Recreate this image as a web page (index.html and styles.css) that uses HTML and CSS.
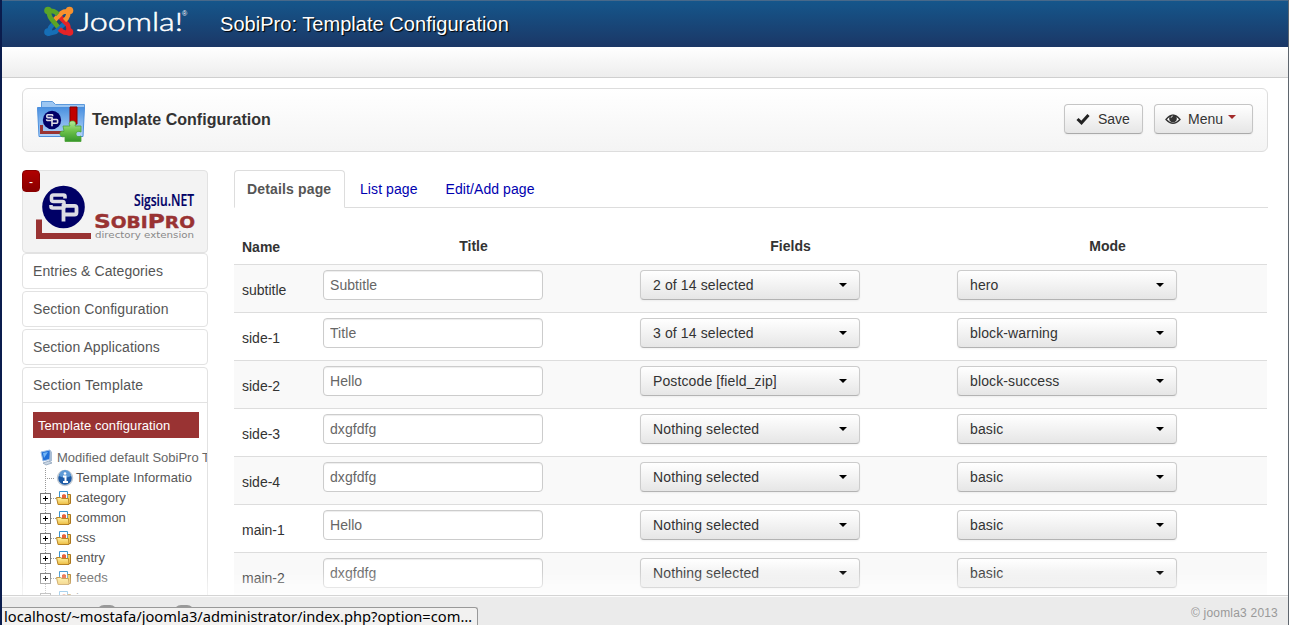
FILE: index.html
```
<!DOCTYPE html>
<html lang="en">
<head>
<meta charset="utf-8">
<title>SobiPro: Template Configuration</title>
<link rel="stylesheet" href="styles.css">
</head>
<body>
<svg width="0" height="0" class="defs">
  <defs>
    <linearGradient id="gFolder" x1="0" y1="0" x2="0" y2="1"><stop offset="0" stop-color="#4a90e0"/><stop offset=".3" stop-color="#6ba6e8"/><stop offset="1" stop-color="#b4d4f8"/></linearGradient>
    <linearGradient id="gGreen" x1="0" y1="0" x2="0" y2="1"><stop offset="0" stop-color="#b5ea9a"/><stop offset=".5" stop-color="#6cc14a"/><stop offset="1" stop-color="#36962a"/></linearGradient>
    <linearGradient id="gYellow" x1="0" y1="0" x2="0" y2="1"><stop offset="0" stop-color="#fff3a6"/><stop offset="1" stop-color="#edbd42"/></linearGradient>
    <g id="sp">
      <circle r="21.3" fill="#000066"/>
      <path d="M1.500-8.500V-10.500Q1.500-12 0-12H-10Q-12-12-12-10V-7.500Q-12-5.500-10-5.500H-1Q.5-5.500.5-4V-.5Q.5 1-1 1H-11Q-12.500 1-12.500-.5V-2" fill="none" stroke="#dcdce4" stroke-width="3.600"/>
      <path d="M0 14.500V-1.200H11Q13-1.200 13 .8V5.500Q13 7.500 11 7.500H0" fill="none" stroke="#dcdce4" stroke-width="3.800"/>
    </g>
    <g id="folder">
      <path d="M3.500 1.500h8v9h-8z" fill="#fff" stroke="#3b96d2"/><path d="M6 5l2-1 2 1v3H6z" fill="#e8633a"/>
      <path d="M11.500 4.500h3v9h-2" fill="#f5cf5b" stroke="#aa761c"/>
      <path d="M.5 7.500h4l1.500 1h6.500l.5 6H2z" fill="url(#gYellow)" stroke="#b98425"/>
    </g>
  </defs>
</svg>
<div class="window">
  <header class="navbar">
    <svg class="joomla" width="152" height="40" viewBox="0 0 152 40">
      <g fill="none" stroke-width="4.600">
        <path d="M24 22l-9.500 9-6 1.500Q8 28 10 25.500l2-2" stroke="#166fb7"/>
        <path d="M18 15l8.500 8.500q1.500 2.500 1 8.500Q23 32 20.500 30l-2-2" stroke="#e52328"/>
        <path d="M11.500 21l9-9q2.500-2 7-1.500 0 4.500-2 7l-2 2" stroke="#f8912d"/>
        <path d="M17 26l-7-8.500Q7.500 14 8 10q4.500-.5 7 1.500l2 2" stroke="#5aa427"/>
      </g>
      <circle cx="7" cy="9.500" r="3.800" fill="#5aa427"/><circle cx="28.500" cy="9.500" r="3.800" fill="#f8912d"/><circle cx="28.500" cy="31" r="3.800" fill="#e52328"/><circle cx="7" cy="31" r="3.800" fill="#166fb7"/>
      <text class="joomla-word" x="36" y="29.500" textLength="106" lengthAdjust="spacingAndGlyphs">Joomla!</text>
      <text class="joomla-reg" x="141" y="15">®</text>
    </svg>
    <h1>SobiPro: Template Configuration</h1>
  </header>
  <div class="subbar"></div>
  <main class="content">
    <section class="titlebar">
      <svg class="title-icon" width="50" height="44" viewBox="0 0 50 44">
        <path d="M4.500 10V2.500h11l3 3h29V10z" fill="#9cc6f2" stroke="#5c99dc"/>
        <path d="M.5 8.500h47l-1.500 29h-44z" fill="url(#gFolder)" stroke="#4c8fdc"/>
        <path d="M4.500 26v7.500h26" fill="none" stroke="#993333" stroke-width="3"/>
        <use href="#sp" transform="translate(15 21) scale(.43)"/>
        <path d="M33 8h7v17h-7z" fill="#c00000" stroke="#850000"/>
        <path d="M26 27h7c-2-3 0-5 2.500-5s4 2 2.500 5h6v6c-3-1.500-5 0-5 2s2 3.500 5 2v5.500H28v-5c-4 1-5-1-5-3s2-3 4-2z" fill="url(#gGreen)" stroke="#4da338" stroke-width=".8"/>
      </svg>
      <h2>Template Configuration</h2>
      <button class="btn save"><svg width="14" height="14" viewBox="0 0 14 14"><path d="M1.500 7l4 3.800L12.500 3" fill="none" stroke="#222" stroke-width="3"/></svg>Save</button>
      <button class="btn menu"><svg width="16" height="14" viewBox="0 0 16 14"><path d="M1 7.500Q8-1 15 7.500Q8 15 1 7.500z" fill="#fff" stroke="#333" stroke-width="1.300"/><circle cx="8" cy="6.500" r="3.800" fill="#333"/><path d="M6 6q0-2 2-2" fill="none" stroke="#ddd" stroke-width=".8"/></svg>Menu<i class="caret red"></i></button>
    </section>
    <div class="columns">
      <aside class="sidebar">
        <div class="brand">
          <span class="collapse">-</span>
          <svg width="184" height="81" viewBox="0 0 184 81">
            <path d="M16 48.500v16.500h52" fill="none" stroke="#993333" stroke-width="6"/>
            <use href="#sp" transform="translate(40.500 36)"/>
            <text class="sigsiu" x="111" y="35" textLength="60" lengthAdjust="spacingAndGlyphs">Sigsiu.NET</text>
            <text class="sobi" x="71" y="57" textLength="101" lengthAdjust="spacingAndGlyphs">S<tspan class="sc">OBI</tspan>P<tspan class="sc">RO</tspan></text>
            <text class="dir" x="72" y="67" textLength="99" lengthAdjust="spacingAndGlyphs">directory extension</text>
          </svg>
        </div>
        <a class="acc">Entries &amp; Categories</a>
        <a class="acc">Section Configuration</a>
        <a class="acc">Section Applications</a>
        <div class="panel">
          <a class="panel-head">Section Template</a>
          <a class="current">Template configuration</a>
          <ul class="tree">
            <li class="root"><svg width="16" height="18" viewBox="0 0 16 18"><path d="M2 3l9-2 1 9-8 2z" fill="#1f6fd8" stroke="#9abce5"/><path d="M4 4l5-1-4 6z" fill="#72b5f5"/><path d="M11 1l2 2v9l-3 1" fill="#a9bdd4"/><path d="M4 14l6-2 3 2-6 2z" fill="#c9d6e4" stroke="#8499b3" stroke-width=".7"/></svg>Modified default SobiPro T</li>
            <li class="info"><span class="line"></span><svg width="18" height="18" viewBox="0 0 18 18"><circle cx="9" cy="9" r="7.500" fill="#1d5ba6" stroke="#c3cbd3" stroke-width="1.500"/><path d="M3 7a6 6 0 0 1 12 0q-6 3-12 0" fill="#5d9ad6"/><path d="M7 7.500h2.500v5M7 13h5" fill="none" stroke="#fff" stroke-width="2"/><circle cx="9" cy="4.500" r="1.300" fill="#fff"/></svg>Template Informatio</li>
            <li><span class="line plus"></span><svg width="17" height="16" viewBox="0 0 17 16"><use href="#folder"/></svg>category</li>
            <li><span class="line plus"></span><svg width="17" height="16" viewBox="0 0 17 16"><use href="#folder"/></svg>common</li>
            <li><span class="line plus"></span><svg width="17" height="16" viewBox="0 0 17 16"><use href="#folder"/></svg>css</li>
            <li><span class="line plus"></span><svg width="17" height="16" viewBox="0 0 17 16"><use href="#folder"/></svg>entry</li>
            <li><span class="line plus"></span><svg width="17" height="16" viewBox="0 0 17 16"><use href="#folder"/></svg>feeds</li>
            <li><span class="line plus"></span><svg width="17" height="16" viewBox="0 0 17 16"><use href="#folder"/></svg>js</li>
          </ul>
        </div>
      </aside>
      <section class="main">
        <nav class="tabs"><a class="active">Details page</a><a>List page</a><a>Edit/Add page</a></nav>
        <div class="grid">
          <div class="row head"><span class="name">Name</span><span>Title</span><span>Fields</span><span>Mode</span></div>
          <div class="row"><span class="name">subtitle</span><input value="Subtitle"><div class="select">2 of 14 selected<i class="caret"></i></div><div class="select">hero<i class="caret"></i></div></div>
          <div class="row"><span class="name">side-1</span><input value="Title"><div class="select">3 of 14 selected<i class="caret"></i></div><div class="select">block-warning<i class="caret"></i></div></div>
          <div class="row"><span class="name">side-2</span><input value="Hello"><div class="select">Postcode [field_zip]<i class="caret"></i></div><div class="select">block-success<i class="caret"></i></div></div>
          <div class="row"><span class="name">side-3</span><input value="dxgfdfg"><div class="select">Nothing selected<i class="caret"></i></div><div class="select">basic<i class="caret"></i></div></div>
          <div class="row"><span class="name">side-4</span><input value="dxgfdfg"><div class="select">Nothing selected<i class="caret"></i></div><div class="select">basic<i class="caret"></i></div></div>
          <div class="row"><span class="name">main-1</span><input value="Hello"><div class="select">Nothing selected<i class="caret"></i></div><div class="select">basic<i class="caret"></i></div></div>
          <div class="row"><span class="name">main-2</span><input value="dxgfdfg"><div class="select">Nothing selected<i class="caret"></i></div><div class="select">basic<i class="caret"></i></div></div>
        </div>
      </section>
    </div>
  </main>
  <footer class="status"><i class="badge one"></i><i class="badge two"></i><span>© joomla3 2013</span></footer>
  <div class="linkbar"><svg width="480" height="19"><text x="2" y="14" textLength="468" lengthAdjust="spacingAndGlyphs">localhost/~mostafa/joomla3/administrator/index.php?option=com…</text></svg></div>
</div>
</body>
</html>
```
FILE: styles.css
```
* { box-sizing: border-box; }
body { margin: 0; height: 625px; overflow: hidden; padding: 0 1px 0 2px; background: linear-gradient(90deg, #0a1c4d 0 2px, #5f666e 2px); font: 14px/18px "Liberation Sans", Arial, sans-serif; color: #333; }
.defs { position: absolute; }
.window { position: relative; height: 625px; overflow: hidden; background: #fff; }
.navbar { height: 47px; display: flex; padding-left: 39px; border-top: 1px solid #48698a; background: linear-gradient(#15568b, #1b3766); }
.joomla { display: block; flex: none; }
.joomla-word { font: 300 26px Lato, sans-serif; fill: #fff; stroke: #fff; stroke-width: .5px; }
.joomla-reg { font: 7px "Liberation Sans", sans-serif; fill: #fff; }
.navbar h1 { margin: 0 0 0 27px; font-size: 20px; font-weight: normal; line-height: 46px; letter-spacing: .04px; color: #fff; text-shadow: 1px 1px 1px #000; }
.subbar { height: 31px; border-bottom: 1px solid #cfcfcf; background: linear-gradient(#fff, #ededed); }
.content { padding: 10px 20px 0; }
.titlebar { height: 64px; display: flex; align-items: center; padding: 0 14px; border: 1px solid #ddd; border-radius: 6px; background: linear-gradient(#fff, #f4f4f4); }
.title-icon { margin-top: 1px; flex: none; }
.titlebar h2 { flex: 1; margin: 0 0 0 5px; font-size: 16px; line-height: 20px; letter-spacing: .02px; }
.btn { height: 30px; display: flex; align-items: center; border: 1px solid #c5c5c5; border-bottom-color: #aaa; border-radius: 4px; margin-bottom: 2px; padding: 0 10px; background: linear-gradient(#fff, #e6e6e6); font: 14px/18px "Liberation Sans", sans-serif; color: #333; box-shadow: 0 1px 2px rgba(0,0,0,.05); text-shadow: 0 1px 1px rgba(255,255,255,.75); }
.save { width: 79px; margin-right: 11px; }
.save svg { margin: 0 8px 0 1px; }
.menu { width: 99px; }
.menu svg { margin-right: 7px; }
.caret { width: 0; height: 0; border: 4px solid transparent; border-top-color: #000; border-bottom: 0; }
.caret.red { border-top-color: #a22a2a; margin: -5px 0 0 5px; }
.columns { display: flex; gap: 26px; margin-top: 18px; }
.sidebar { width: 186px; flex: none; }
.brand { position: relative; height: 83px; border: 1px solid #e2e2e2; border-radius: 4px; background: #f3f3f3; }
.brand svg { display: block; }
.collapse { position: absolute; left: -1px; top: -1px; width: 18px; height: 22px; border-radius: 4px; border: 1px solid #8a0000; background: linear-gradient(#b00000, #8a0000); color: #fff; font-size: 12px; line-height: 22px; text-align: center; }
.sigsiu { font: 600 16px "Open Sans", sans-serif; fill: #000066; stroke: #000066; stroke-width: .2px; }
.sobi { font: bold 20px "DejaVu Sans", sans-serif; fill: #993333; stroke: #993333; stroke-width: .4px; }
.sobi .sc { font-size: 16px; }
.dir { font: 9.5px "DejaVu Sans", sans-serif; fill: #888; }
.acc, .panel-head { letter-spacing: .08px; }
.acc { display: block; height: 36px; margin-bottom: 2px; padding: 8px 10px; border: 1px solid #e2e2e2; border-radius: 4px; color: #555; }
.panel { height: 260px; border: 1px solid #e2e2e2; border-radius: 4px; overflow: hidden; }
.panel-head { display: block; height: 35px; padding: 8px 10px; border-bottom: 1px solid #e2e2e2; color: #555; letter-spacing: .2px; }
.current { display: block; height: 26px; margin: 9px 8px 0 10px; padding-left: 5px; background: #993333; color: #fff; font-size: 13px; line-height: 27px; letter-spacing: .07px; }
.tree { list-style: none; margin: 10px 0 0; padding: 0 0 0 16px; font-size: 13px; line-height: 20px; color: #555; }
.tree li { height: 20px; display: flex; align-items: center; white-space: nowrap; }
.tree svg { flex: none; margin-right: 3px; }
.tree .root svg { margin-right: 2px; }
.tree .root { color: #666; }
.tree .info { letter-spacing: .1px; }
.line { position: relative; flex: none; width: 17px; height: 20px; background: repeating-linear-gradient(90deg, #999 0 1px, transparent 1px 2px) 6px 10px / 11px 1px no-repeat, repeating-linear-gradient(#999 0 1px, transparent 1px 2px) 6px 0 / 1px 20px no-repeat; }
.info .line { width: 16px; }
.tree .info svg { margin-right: 2px; margin-left: 1px; }
.plus::before { content: ""; position: absolute; left: 2px; top: 6px; width: 9px; height: 9px; border: 1px solid #777; background: linear-gradient(#000, #000) center / 5px 1px no-repeat, linear-gradient(#000, #000) center / 1px 5px no-repeat, #fff; }
.plus::before { left: 1px; top: 5px; }
.tree .plus + svg { margin-left: 0; margin-right: 3px; }
.main { flex: 1; }
.tabs { height: 38px; display: flex; border-bottom: 1px solid #ddd; color: #0000b0; }
.tabs a { height: 38px; padding: 9px 12px; border: 1px solid transparent; margin-right: 2px; letter-spacing: .08px; }
.tabs .active { width: 111px; background: #fff; border-color: #ddd #ddd #fff; border-radius: 4px 4px 0 0; color: #555; font-weight: bold; white-space: nowrap; letter-spacing: .15px; }
.grid { width: 1033px; margin-top: 19px; }
.row { height: 48px; display: grid; grid-template-columns: 89px 317px 317px 1fr; align-items: start; padding-top: 5px; border-top: 1px solid #ddd; }
.row:nth-child(even) { background: #f9f9f9; }
.row .name { padding: 11px 0 0 8px; text-align: left; }
.head { height: 37px; padding-top: 10px; border: 0; font-weight: bold; text-align: center; }
.head span { padding-right: 16px; }
.head span:last-child { padding-right: 9px; }
.head .name { padding-top: 1px; }
.row input, .select { width: 220px; height: 30px; border: 1px solid #ccc; border-radius: 4px; font: 14px/18px "Liberation Sans", sans-serif; }
.row input { padding: 0 6px 1px; color: #666; background: #fff; box-shadow: inset 0 1px 1px rgba(0,0,0,.075); letter-spacing: .06px; }
.select { display: flex; align-items: center; justify-content: space-between; padding: 0 12px; background: linear-gradient(#fff, #e6e6e6); border-bottom-color: #b3b3b3; box-shadow: 0 1px 2px rgba(0,0,0,.05); letter-spacing: .12px; }
.status { position: absolute; left: 0; right: 0; bottom: 0; height: 30px; display: flex; justify-content: flex-end; padding: 9px 10px 0; border-top: 1px solid #d4d4d4; background: #ebebeb; box-shadow: inset 0 1px 0 rgba(255,255,255,.8), 0 -15px 15px rgba(255,255,255,.6); color: #999; font-size: 12px; line-height: 16px; letter-spacing: .2px; }
.badge { position: absolute; top: 9px; width: 20px; height: 14px; border-radius: 8px; background: #999; }
.one { left: 95px; }
.two { left: 172px; }
.linkbar { position: absolute; left: 0; bottom: 0; width: 476px; height: 18px; border: 1px solid #999; border-width: 1px 1px 0 0; border-radius: 0 3px 0 0; background: #f2f1f0; overflow: hidden; }
.linkbar svg { display: block; }
.linkbar text { font: 15px "Noto Sans", sans-serif; fill: #000; }
```
